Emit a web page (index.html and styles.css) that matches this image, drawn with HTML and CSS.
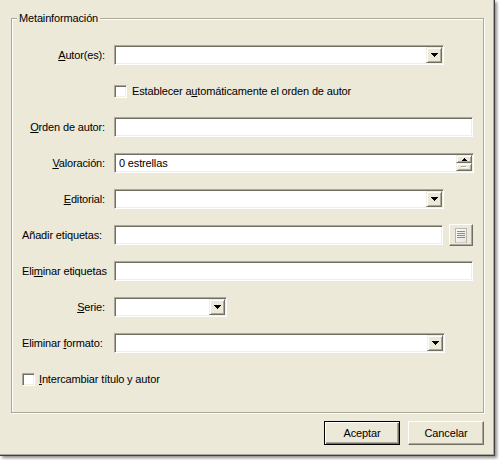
FILE: index.html
```html
<!DOCTYPE html>
<html lang="es">
<head>
<meta charset="utf-8">
<title>Metainformación</title>
<link rel="stylesheet" href="styles.css">
</head>
<body>
<div class="dialog">
  <div class="group">
    <div class="group-title">Metainformación</div>
    <div class="form">
      <label class="lbl"><u>A</u>utor(es):</label>
      <div class="combo w330"><span class="combo-text"></span><span class="drop"><svg width="7" height="4" viewBox="0 0 7 4"><path d="M0 0H7V1H6V2H5V3H4V4H3V3H2V2H1V1H0Z" fill="#000"/></svg></span></div>

      <div class="check-row field"><span class="checkbox"></span><span class="check-text">Establecer a<u>u</u>tomáticamente el orden de autor</span></div>

      <label class="lbl"><u>O</u>rden de autor:</label>
      <div class="edit w359"></div>

      <label class="lbl"><u>V</u>aloración:</label>
      <div class="spin"><span class="spin-text">0 estrellas</span><span class="spin-btns"><span class="spin-btn"><svg width="5" height="3" viewBox="0 0 5 3"><path d="M2 0H3V1H4V2H5V3H0V2H1V1H2Z" fill="#000"/></svg></span><span class="spin-btn"><svg width="6" height="3" viewBox="0 0 6 3"><path d="M0 0H5V1H0Z" fill="#aca899"/><path d="M1 1H6V2H1Z" fill="#fff"/></svg></span></span></div>

      <label class="lbl"><u>E</u>ditorial:</label>
      <div class="combo w330"><span class="combo-text"></span><span class="drop"><svg width="7" height="4" viewBox="0 0 7 4"><path d="M0 0H7V1H6V2H5V3H4V4H3V3H2V2H1V1H0Z" fill="#000"/></svg></span></div>

      <label class="lbl left">Añadir etiquetas:</label>
      <div class="tags-row"><div class="edit w330"></div><span class="tag-btn"><svg width="12" height="15" viewBox="0 0 12 15"><defs><linearGradient id="pg" x1="0" y1="0" x2="1" y2="1"><stop offset="0" stop-color="#ffffff"/><stop offset="1" stop-color="#e4e2da"/></linearGradient></defs><rect x="0.5" y="0.5" width="11" height="14" fill="url(#pg)" stroke="#b8b6ae"/><path d="M2 3H10M2 5H10M2 7H10M2 9H10" stroke="#8c8a84" stroke-width="1"/><path d="M1 14H11" stroke="#d0cec6"/></svg></span></div>

      <label class="lbl left">Eli<u>m</u>inar etiquetas</label>
      <div class="edit w359"></div>

      <label class="lbl"><u>S</u>erie:</label>
      <div class="combo w113"><span class="combo-text"></span><span class="drop"><svg width="7" height="4" viewBox="0 0 7 4"><path d="M0 0H7V1H6V2H5V3H4V4H3V3H2V2H1V1H0Z" fill="#000"/></svg></span></div>

      <label class="lbl left">Eliminar <u>f</u>ormato:</label>
      <div class="combo w331"><span class="combo-text"></span><span class="drop"><svg width="7" height="4" viewBox="0 0 7 4"><path d="M0 0H7V1H6V2H5V3H4V4H3V3H2V2H1V1H0Z" fill="#000"/></svg></span></div>

      <div class="check-row full"><span class="checkbox"></span><span class="check-text narrow"><u>I</u>ntercambiar título y autor</span></div>
    </div>
  </div>
  <div class="buttons">
    <button class="btn default">Aceptar</button>
    <button class="btn">Cancelar</button>
  </div>
</div>
</body>
</html>
```

FILE: styles.css
```css
html, body {
  margin: 0;
  padding: 0;
  background: #ffffff;
}

body {
  width: 499px;
  height: 460px;
  overflow: hidden;
  font-family: "Liberation Sans", Arial, sans-serif;
  font-size: 11px;
  letter-spacing: -0.15px;
  color: #000;
}

.dialog {
  box-sizing: border-box;
  width: 495px;
  height: 456px;
  background: #ece9d8;
  box-shadow: inset -1px -1px 0 #404040, inset -2px -2px 0 #aca899, 2px 2px 3px rgba(0, 0, 0, 0.45);
  padding-top: 18px;
  display: flex;
  flex-direction: column;
}

.group {
  box-sizing: border-box;
  margin-left: 11px;
  width: 473px;
  height: 395px;
  border: 1px solid #aca899;
  box-shadow: inset 1px 1px 0 #fff, 1px 1px 0 #fff;
}

.group-title {
  display: table;
  margin: -7px 0 0 5px;
  padding: 0 2px;
  line-height: 13px;
  height: 13px;
  background: #ece9d8;
}

.form {
  margin-top: 20px;
  padding-left: 10px;
  display: grid;
  grid-template-columns: 83px 359px;
  grid-auto-rows: 20px;
  column-gap: 9px;
  row-gap: 16px;
}

.lbl {
  align-self: center;
  text-align: right;
  white-space: nowrap;
  line-height: 13px;
}

.lbl.left {
  text-align: left;
}

u {
  text-decoration: underline;
  text-underline-offset: 1px;
}

.edit, .combo, .spin {
  box-sizing: border-box;
  height: 20px;
  background: #fff;
  border-style: solid;
  border-width: 1px;
  border-color: #aca899 #fff #fff #aca899;
  box-shadow: inset 1px 1px 0 #716f64, inset -1px -1px 0 #f1efe2;
}

.w330 { width: 330px; }
.w331 { width: 331px; }
.w359 { width: 359px; }
.w113 { width: 113px; }

.combo, .spin {
  display: flex;
  align-items: stretch;
  padding: 1px;
}

.combo-text, .spin-text {
  flex: 1;
  padding-left: 3px;
  line-height: 16px;
}

.drop {
  box-sizing: border-box;
  width: 16px;
  height: 16px;
  background: #ece9d8;
  border-style: solid;
  border-width: 1px;
  border-color: #f1efe2 #716f64 #716f64 #f1efe2;
  box-shadow: inset 1px 1px 0 #fff, inset -1px -1px 0 #aca899;
  display: flex;
  align-items: center;
  justify-content: center;
}

.drop svg, .spin-btn svg, .tag-btn svg {
  display: block;
  shape-rendering: crispEdges;
}

.spin {
  width: 360px;
}

.spin-btns {
  display: flex;
  flex-direction: column;
  width: 16px;
}

.spin-btn {
  box-sizing: border-box;
  height: 8px;
  background: #ece9d8;
  border-style: solid;
  border-width: 1px;
  border-color: #f1efe2 #716f64 #716f64 #f1efe2;
  box-shadow: inset 1px 1px 0 #fff, inset -1px -1px 0 #aca899;
  display: flex;
  align-items: center;
  justify-content: center;
}

.tags-row {
  display: flex;
  align-items: flex-start;
  gap: 6px;
}

.tag-btn {
  box-sizing: border-box;
  width: 24px;
  height: 22px;
  margin-top: -1px;
  background: #ece9d8;
  border-style: solid;
  border-width: 1px;
  border-color: #fff #716f64 #716f64 #fff;
  box-shadow: inset -1px -1px 0 #aca899;
  display: flex;
  align-items: center;
  justify-content: center;
}

.check-row {
  display: flex;
  align-items: center;
  white-space: nowrap;
}

.check-row.field {
  grid-column: 2;
}

.check-row.full {
  grid-column: 1 / -1;
}

.checkbox {
  box-sizing: border-box;
  width: 13px;
  height: 13px;
  background: #fff;
  border-style: solid;
  border-width: 1px;
  border-color: #aca899 #fff #fff #aca899;
  box-shadow: inset 1px 1px 0 #716f64, inset -1px -1px 0 #f1efe2;
  flex: none;
}

.check-text {
  margin-left: 5px;
  line-height: 13px;
}

.check-text.narrow {
  margin-left: 4px;
}

.buttons {
  margin-top: 8px;
  margin-left: 11px;
  width: 473px;
  display: flex;
  justify-content: flex-end;
  gap: 8px;
}

.btn {
  box-sizing: border-box;
  width: 76px;
  height: 24px;
  padding: 0;
  margin: 0;
  font-family: "Liberation Sans", Arial, sans-serif;
  font-size: 11px;
  letter-spacing: -0.15px;
  color: #000;
  background: #ece9d8;
  border-style: solid;
  border-width: 1px;
  border-color: #fff #716f64 #716f64 #fff;
  box-shadow: inset -1px -1px 0 #aca899;
  border-radius: 0;
}

.btn.default {
  border-color: #000;
  box-shadow: inset 1px 1px 0 #fff, inset -1px -1px 0 #716f64, inset -2px -2px 0 #aca899;
}
```
